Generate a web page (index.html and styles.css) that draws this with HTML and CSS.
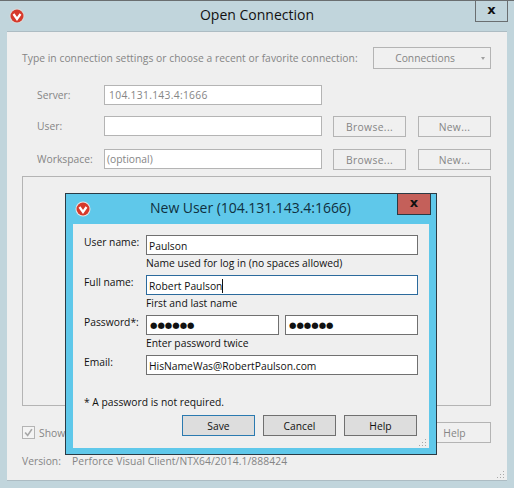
FILE: index.html

```html
<!DOCTYPE html>
<html lang="en">
<head>
  <meta charset="UTF-8">
  <title>Open Connection</title>
  <link rel="stylesheet" href="styles.css">
</head>
<body>
  <div class="window">
    <div class="titlebar">
      <svg class="logo" viewBox="0 0 16 16"><circle cx="8" cy="8" r="7.5" fill="#d9d9d9"/><circle cx="8" cy="8" r="6.5" fill="#d6392b"/><path d="M4.5 6 L8 11 L11.5 6" fill="none" stroke="#fff" stroke-width="2.2"/></svg>
      <div class="title">Open Connection</div>
      <div class="close">x</div>
    </div>
    <div class="client">
      <div class="intro">
        <span class="intro-text">Type in connection settings or choose a recent or favorite connection:</span>
        <div class="btn connections">Connections<span class="caret"></span></div>
      </div>
      <div class="conn-form">
        <label>Server:</label>
        <div class="field server">104.131.143.4:1666</div>
        <label>User:</label>
        <div class="field"></div>
        <div class="btn wide">Browse...</div>
        <div class="btn wide">New...</div>
        <label>Workspace:</label>
        <div class="field optional">(optional)</div>
        <div class="btn wide">Browse...</div>
        <div class="btn wide">New...</div>
      </div>
      <div class="groupbox"></div>
      <div class="show-row">
        <span class="check"><svg viewBox="0 0 13 13"><path d="M2.5 6.5 L5.5 10 L10.5 2.5" fill="none" stroke="#a8a8a8" stroke-width="2"/></svg></span>
        <span class="show-label">Show</span>
        <div class="btn help">Help</div>
      </div>
      <div class="version">
        <span class="version-label">Version:</span>
        <span class="spaced">Perforce Visual Client/NTX64/2014.1/888424</span>
      </div>
      <svg class="grip" viewBox="0 0 9 9"><path d="M7 1h1v1H7zM4 4h1v1H4zM7 4h1v1H7zM1 7h1v1H1zM4 7h1v1H4zM7 7h1v1H7z" fill="#a8a8a8"/></svg>
    </div>
  </div>

  <div class="dialog">
    <div class="dlg-titlebar">
      <svg class="logo" viewBox="0 0 16 16"><circle cx="8" cy="8" r="7.5" fill="#e6e6e6"/><circle cx="8" cy="8" r="6.5" fill="#d6392b"/><path d="M4.5 6 L8 11 L11.5 6" fill="none" stroke="#fff" stroke-width="2.2"/></svg>
      <div class="dlg-title">New User (104.131.143.4:1666)</div>
      <div class="dlg-close">x</div>
    </div>
    <div class="dlg-client">
      <div class="user-form">
        <label>User name:</label>
        <div class="input">Paulson</div>
        <div class="hint">Name used for log in (no spaces allowed)</div>
        <label>Full name:</label>
        <div class="input focused">Robert Paulson<span class="cursor"></span></div>
        <div class="hint">First and last name</div>
        <label>Password*:</label>
        <div class="pw-pair">
          <div class="input dots">●●●●●●</div>
          <div class="input dots">●●●●●●</div>
        </div>
        <div class="hint">Enter password twice</div>
        <label>Email:</label>
        <div class="input">HisNameWas@RobertPaulson.com</div>
      </div>
      <div class="note">* A password is not required.</div>
      <div class="dlg-buttons">
        <div class="dbtn default">Save</div>
        <div class="dbtn">Cancel</div>
        <div class="dbtn">Help</div>
      </div>
      <svg class="grip" viewBox="0 0 9 9"><path d="M7 1h1v1H7zM4 4h1v1H4zM7 4h1v1H7zM1 7h1v1H1zM4 7h1v1H4zM7 7h1v1H7z" fill="#a8a8a8"/></svg>
    </div>
  </div>
</body>
</html>
```

FILE: styles.css

```css
html, body {
  margin: 0;
  padding: 0;
}
body {
  width: 514px;
  height: 488px;
  position: relative;
  overflow: hidden;
  background-color: #c1d5dc;
  font-family: "Open Sans", "Noto Sans", sans-serif;
  font-size: 10.3px;
  color: #858585;
}
div, label, span {
  box-sizing: border-box;
}
.spaced {
  letter-spacing: 0.08px;
}

/* back window */
.window {
  width: 514px;
  height: 488px;
  border-top: 1px solid #6a6e70;
  padding: 0 7px 7px;
  display: flex;
  flex-direction: column;
}
.titlebar {
  height: 30px;
  flex: none;
  position: relative;
  display: flex;
  align-items: center;
  justify-content: center;
}
.logo {
  position: absolute;
  left: 2px;
  top: 7px;
  width: 16px;
  height: 16px;
}
.title {
  font-size: 14px;
  color: #111;
  line-height: 28px;
  margin-bottom: 2px;
}
.close {
  position: absolute;
  right: -1px;
  top: -1px;
  width: 33px;
  height: 22px;
  border: 1px solid #6a6e70;
  border-top: none;
  text-align: center;
  font-family: "DejaVu Sans", sans-serif;
  font-size: 13px;
  font-weight: bold;
  line-height: 19px;
  color: #111;
}
.client {
  flex: 1;
  position: relative;
  background-color: #efefef;
  border-top: 1px solid #adbcc3;
  border-bottom: 1px solid #adbcc3;
  padding: 15px 16px 0 15px;
}
.intro {
  display: flex;
  justify-content: space-between;
  align-items: center;
}
.intro-text {
  letter-spacing: 0.03px;
}
.btn {
  border: 1px solid #b4b4b4;
  background-color: #f0f0f0;
  display: flex;
  align-items: center;
  justify-content: center;
  height: 21px;
  width: 73px;
}
.wide {
  letter-spacing: 0.35px;
}
.connections {
  width: 118px;
  height: 22px;
  position: relative;
  padding-right: 14px;
}
.caret {
  position: absolute;
  right: 5px;
  top: 9px;
  border-left: 2px solid transparent;
  border-right: 2px solid transparent;
  border-top: 3px solid #a0a0a0;
}
.conn-form {
  display: grid;
  grid-template-columns: 67px 218px 84px 85px;
  grid-template-rows: 20px 22px 21px;
  row-gap: 11px;
  margin-top: 16px;
  padding-left: 15px;
  align-items: start;
}
.conn-form label {
  line-height: 20px;
}
.conn-form .btn {
  justify-self: end;
}
.field {
  height: 20px;
  background-color: #fff;
  border: 1px solid #b4b4b4;
  padding: 0 4px;
  line-height: 18px;
  white-space: nowrap;
}
.server {
  grid-column: 2 / 5;
  width: 218px;
  letter-spacing: 0.3px;
}
.optional {
  padding-left: 2px;
}
.groupbox {
  height: 230px;
  margin-top: 6px;
  border: 1px solid #b4b4b4;
}
.show-row {
  display: flex;
  align-items: center;
  margin-top: 16px;
  height: 21px;
}
.check {
  width: 13px;
  height: 13px;
  border: 1px solid #b4b4b4;
  background-color: #f4f4f4;
  display: flex;
}
.check svg {
  width: 11px;
  height: 11px;
}
.show-label {
  margin-left: 4px;
}
.help {
  margin-left: auto;
}
.version {
  display: flex;
  margin-top: 11px;
}
.version-label {
  width: 50px;
}
.grip {
  position: absolute;
  right: 2px;
  bottom: 1px;
  width: 9px;
  height: 9px;
}

/* new user dialog */
.dialog {
  position: absolute;
  left: 65px;
  top: 193px;
  width: 372px;
  height: 262px;
  background-color: #5fc8ea;
  border: 1px solid #2a3a44;
  padding: 0 7px 6px;
  display: flex;
  flex-direction: column;
  color: #111;
}
.dlg-titlebar {
  height: 30px;
  flex: none;
  position: relative;
  display: flex;
  align-items: center;
  justify-content: center;
}
.dlg-title {
  font-size: 14px;
  color: #10303f;
  line-height: 28px;
  margin-bottom: 2px;
  letter-spacing: -0.04px;
  margin-left: -1px;
}
.dlg-close {
  position: absolute;
  right: -2px;
  top: -1px;
  width: 34px;
  height: 22px;
  background-color: #c4605a;
  border: 1px solid #2a3a44;
  text-align: center;
  font-family: "DejaVu Sans", sans-serif;
  font-size: 13px;
  font-weight: bold;
  line-height: 17px;
  color: #111;
}
.dlg-client {
  flex: 1;
  position: relative;
  background-color: #efefef;
  padding: 11px 11px 0 11px;
}
.user-form {
  display: grid;
  grid-template-columns: 62px 272px;
  align-items: start;
}
.user-form label {
  line-height: 15px;
  grid-column: 1;
}
.input {
  height: 20px;
  background-color: #fff;
  border: 1px solid #707070;
  padding: 0 2px;
  line-height: 20px;
  white-space: nowrap;
  grid-column: 2;
}
.focused {
  border-color: #2b6a9c;
}
.cursor {
  display: inline-block;
  width: 1px;
  height: 14px;
  background-color: #111;
  vertical-align: -3px;
}
.hint {
  grid-column: 2;
  height: 20px;
  line-height: 16px;
}
.pw-pair {
  display: grid;
  grid-template-columns: 133px 133px;
  column-gap: 6px;
  grid-column: 2;
}
.pw-pair .input {
  grid-column: auto;
}
.dots {
  font-size: 8.5px;
  line-height: 18px;
  padding-left: 3px;
  font-family: "DejaVu Sans", sans-serif;
}
.note {
  margin-top: 20px;
  line-height: 14px;
}
.dlg-buttons {
  display: flex;
  justify-content: flex-end;
  gap: 8px;
  margin-top: 6px;
  padding-right: 1px;
}
.dbtn {
  width: 73px;
  height: 21px;
  background-color: #dddddd;
  border: 1px solid #707070;
  display: flex;
  align-items: center;
  justify-content: center;
}
.default {
  border-color: #2b7ab0;
}
```
